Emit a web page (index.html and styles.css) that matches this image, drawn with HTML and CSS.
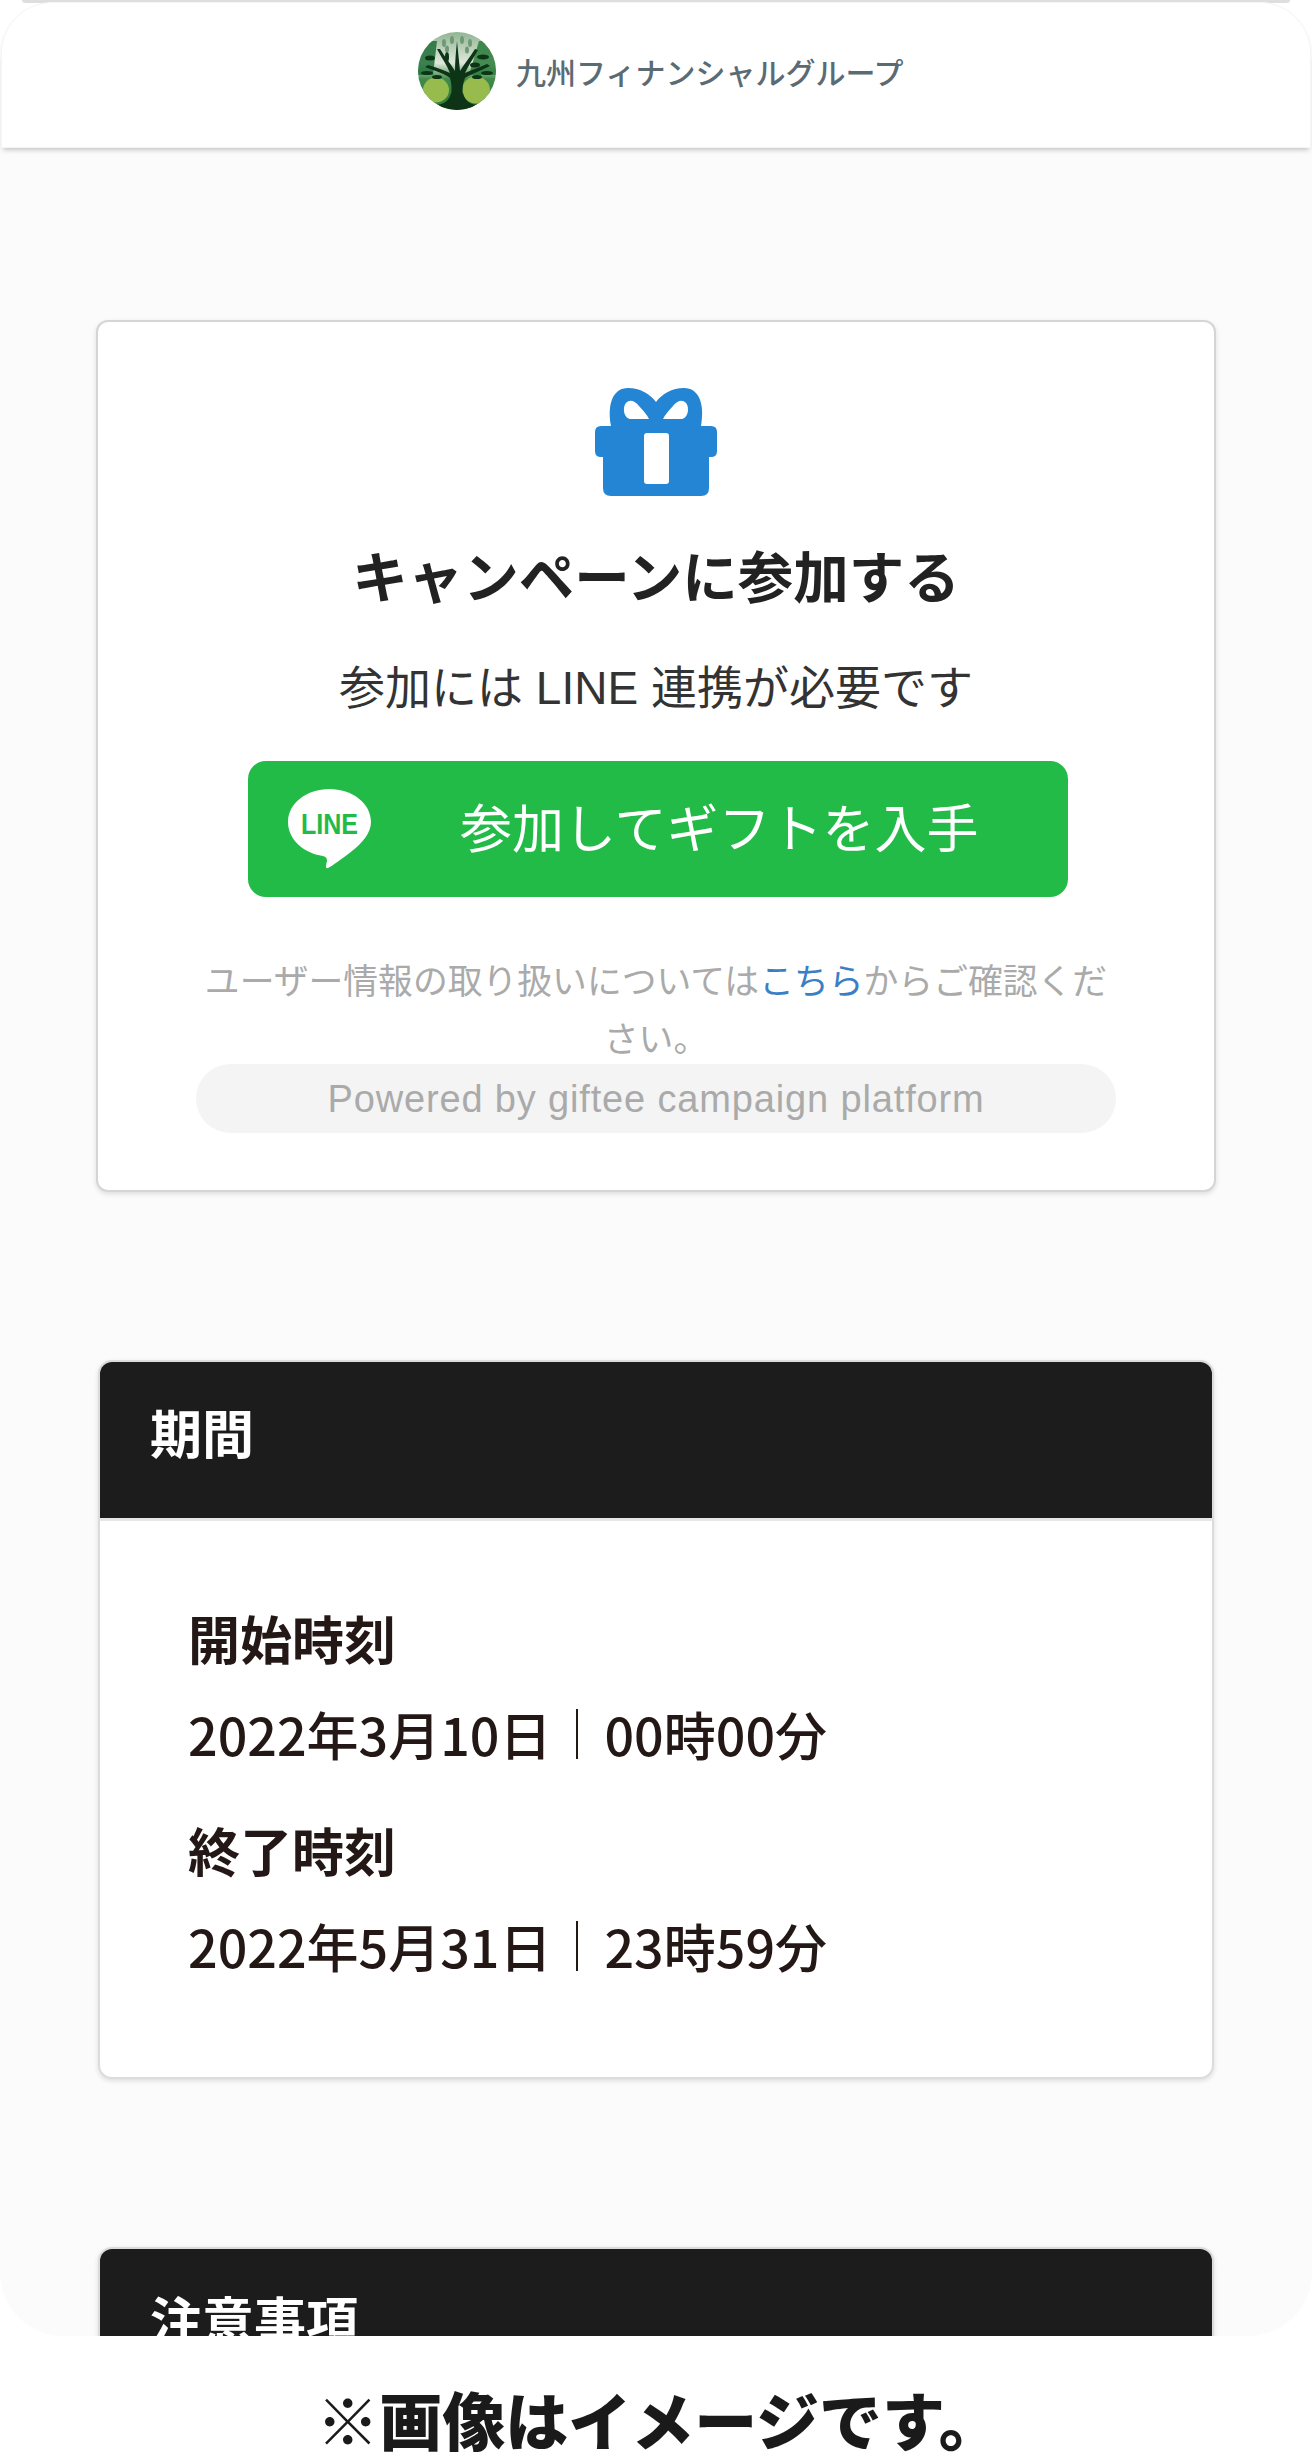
FILE: index.html
```html
<!DOCTYPE html>
<html lang="ja">
<head>
    <meta charset="UTF-8">
    <meta name="viewport" content="width=device-width, initial-scale=1.0">
    <title>九州フィナンシャルグループ</title>
    <link rel="stylesheet" href="styles.css">
</head>
<body>
    <div class="screen">
        <div class="top-strip"></div>
        <header class="app-header">
            <svg class="logo-mark" viewBox="0 0 80 80" width="80" height="80" aria-hidden="true">
                <defs>
                    <linearGradient id="logoBg" x1="0" y1="0" x2="0" y2="1">
                        <stop offset="0" stop-color="#8fb391"/>
                        <stop offset="0.4" stop-color="#dfe8dc"/>
                        <stop offset="0.6" stop-color="#3f8a4a"/>
                        <stop offset="1" stop-color="#2f7a3a"/>
                    </linearGradient>
                    <clipPath id="logoClip"><circle cx="40" cy="40" r="39"/></clipPath>
                </defs>
                <g clip-path="url(#logoClip)">
                    <rect width="80" height="80" fill="url(#logoBg)"/>
                    <path d="M1 44 V10 H20 L16 44Z" fill="#1f6f36" opacity=".85"/>
                    <path d="M79 44 V10 H62 L52 44Z" fill="#2a7a3a" opacity=".85"/>
                    <ellipse cx="19" cy="59" rx="13" ry="12.5" fill="#97bb4c"/>
                    <ellipse cx="59" cy="59" rx="14" ry="13.5" fill="#97bb4c"/>
                    <path d="M33 72 C35 62 35 54 33 47 C27 42 18 40 8 36 L11 34 C20 37 27 39 33 42 C30 34 24 26 20 18 L23 18 C28 26 33 32 38 40 C38 30 39 20 40 10 C41 20 42 30 43 40 C48 32 53 26 58 18 L61 19 C56 28 51 35 48 42 C54 39 61 37 70 33 L73 35 C63 40 54 43 48 47 C45 54 45 62 47 72Z" fill="#0d3416"/>
                    <path d="M40 80 C30 80 24 77 18 73 C26 75 32 70 34 62 L46 62 C48 70 54 75 62 73 C56 77 50 80 40 80Z" fill="#0d3416"/>
                </g>
                <g fill="#0d3416">
                    <ellipse cx="13" cy="27" rx="5" ry="2.5"/>
                    <ellipse cx="10" cy="42" rx="6" ry="2"/>
                    <ellipse cx="20" cy="46" rx="5" ry="2"/>
                    <ellipse cx="66" cy="26" rx="6" ry="2.5"/>
                    <ellipse cx="58" cy="34" rx="5" ry="2.5"/>
                    <ellipse cx="70" cy="42" rx="6" ry="2"/>
                    <ellipse cx="60" cy="46" rx="5" ry="2"/>
                    <ellipse cx="30" cy="26" rx="2" ry="5"/>
                </g>
                <g fill="#6f9a74">
                    <ellipse cx="27" cy="12" rx="2" ry="4"/>
                    <ellipse cx="35" cy="9" rx="2" ry="4"/>
                    <ellipse cx="45" cy="9" rx="2" ry="4"/>
                    <ellipse cx="53" cy="12" rx="2" ry="4"/>
                    <ellipse cx="30" cy="18" rx="2" ry="3.5"/>
                    <ellipse cx="50" cy="19" rx="2" ry="3.5"/>
                </g>
            </svg>
            <span class="logo-text">九州フィナンシャルグループ</span>
        </header>

        <main class="content">
            <section class="join-card">
                <svg class="gift-icon" viewBox="0 0 122 108" width="122" height="108" aria-hidden="true">
                    <path fill="#2385d3" d="M6 38 H116 Q122 38 122 44 V63 Q122 69 116 69 H6 Q0 69 0 63 V44 Q0 38 6 38Z"/>
                    <path fill="#2385d3" d="M8 69 H114 V100 Q114 108 106 108 H16 Q8 108 8 100Z"/>
                    <path fill="#2385d3" fill-rule="evenodd" d="M16 38 C12 16 18 0 33 0 C45 0 55 6 61 14 C67 6 77 0 89 0 C104 0 110 16 106 38Z M54 31 L36 31 C29 31 27 20 31 15 C35 11 40 13 44 18 C48 22 52 27 54 31Z M68 31 L86 31 C93 31 95 20 91 15 C87 11 82 13 78 18 C74 22 70 27 68 31Z"/>
                    <rect x="49" y="45" width="25" height="51" rx="3" fill="#fff"/>
                </svg>
                <h2 class="join-title">キャンペーンに参加する</h2>
                <p class="join-note">参加には LINE 連携が必要です</p>
                <a class="line-button" href="#">
                    <svg class="line-icon" viewBox="0 0 83 80" width="83" height="80" aria-hidden="true">
                        <path fill="#fff" d="M41.5 0 C64 0 83 14 83 33 C83 44 74 54 64 62 C54 70 44 77 40 79 C37 80 38 76 39 72 C39 69 38 68 35 67 C15 64 0 50 0 33 C0 14 19 0 41.5 0Z"/>
                        <text x="13" y="45" textLength="57" lengthAdjust="spacingAndGlyphs" class="line-icon-text">LINE</text>
                    </svg>
                    <span class="line-button-label">参加してギフトを入手</span>
                </a>
                <p class="privacy">ユーザー情報の取り扱いについては<a href="#">こちら</a>からご確認ください。</p>
                <div class="powered">Powered by giftee campaign platform</div>
            </section>

            <section class="info-card">
                <h3 class="info-head">期間</h3>
                <div class="info-body">
                    <p class="info-label">開始時刻</p>
                    <p class="info-value"><span>2022年3月10日</span><i class="sep"></i><span>00時00分</span></p>
                    <p class="info-label">終了時刻</p>
                    <p class="info-value"><span>2022年5月31日</span><i class="sep"></i><span>23時59分</span></p>
                </div>
            </section>

            <section class="info-card">
                <h3 class="info-head">注意事項</h3>
            </section>
        </main>
    </div>
    <p class="caption">※画像はイメージです。</p>
</body>
</html>
```

FILE: styles.css
```css
html, body {
    margin: 0;
    padding: 0;
    background-color: #fff;
}

body {
    font-family: "Noto Sans CJK JP", "Noto Sans", sans-serif;
    width: 1312px;
    height: 2460px;
    overflow: hidden;
}

p, h2, h3 {
    margin: 0;
}

.screen {
    height: 2336px;
    box-sizing: border-box;
    overflow: hidden;
    background:
        linear-gradient(#fff, #fff) left top / 100% 60px no-repeat,
        #fbfbfb;
    border-radius: 0 0 64px 64px;
}

.top-strip {
    height: 3px;
    margin: 0 22px;
    background-color: #dedede;
    border-radius: 0 0 3px 3px;
}

.app-header {
    display: flex;
    align-items: center;
    gap: 19px;
    height: 144px;
    margin: 0 2px;
    padding: 0 0 9px 415px;
    box-sizing: border-box;
    background-color: #fff;
    border-radius: 50px 50px 0 0;
    box-shadow: 0 0 0 1px #f5f5f5, 0 4px 5px -1px rgba(0, 0, 0, 0.22);
}

.logo-mark {
    flex: none;
}

.logo-text {
    font-size: 30px;
    font-weight: 500;
    color: #5b6b74;
    white-space: nowrap;
}

.content {
    display: flex;
    flex-direction: column;
    align-items: center;
    padding-top: 173px;
}

.join-card {
    display: flex;
    flex-direction: column;
    align-items: center;
    width: 1120px;
    height: 872px;
    padding-top: 66px;
    box-sizing: border-box;
    font-family: "Liberation Sans", "Noto Sans CJK JP", sans-serif;
    background-color: #fff;
    border: 2px solid #d5d5d5;
    border-radius: 12px;
    box-shadow: 0 2px 5px rgba(0, 0, 0, 0.12);
}

.gift-icon {
    flex: none;
}

.join-title {
    margin-top: 44px;
    font-size: 55.5px;
    line-height: 78px;
    font-weight: 700;
    color: #222;
}

.join-note {
    margin-top: 40px;
    font-size: 46px;
    line-height: 60px;
    color: #333;
}

.line-button {
    display: flex;
    align-items: center;
    width: 820px;
    height: 136px;
    margin-top: 43px;
    margin-left: 4px;
    padding-left: 40px;
    box-sizing: border-box;
    background-color: #22bb47;
    border-radius: 18px;
    color: #fff;
    text-decoration: none;
}

.line-icon {
    flex: none;
}

.line-icon-text {
    font-family: "Liberation Sans", sans-serif;
    font-size: 29px;
    font-weight: 700;
    fill: #22bb47;
}

.line-button-label {
    margin-left: 89px;
    padding-bottom: 8px;
    font-size: 52px;
    white-space: nowrap;
}

.privacy {
    width: 920px;
    margin-top: 56px;
    font-size: 34.8px;
    line-height: 58px;
    color: #aaa;
    text-align: center;
}

.privacy a {
    color: #3a7fc4;
    text-decoration: none;
}

.powered {
    width: 920px;
    height: 69px;
    margin-top: -5px;
    background-color: #f4f4f4;
    border-radius: 35px;
    font-size: 38px;
    letter-spacing: 0.85px;
    line-height: 71px;
    color: #aaa;
    text-align: center;
}

.info-card {
    width: 1112px;
    margin-top: 168px;
    background-color: #fff;
    border: 2px solid #dcdcdc;
    border-radius: 14px;
    box-shadow: 0 2px 5px rgba(0, 0, 0, 0.12);
    overflow: hidden;
    flex: none;
}

.info-head {
    height: 159px;
    padding: 33px 50px 0;
    box-sizing: border-box;
    background-color: #1c1c1c;
    color: #fff;
    font-size: 52px;
    line-height: 74px;
    font-weight: 700;
    border-bottom: 3px solid #e6e6e6;
}

.info-body {
    height: 556px;
    padding: 80px 88px 0;
    box-sizing: border-box;
    color: #231815;
}

.info-label {
    font-size: 52px;
    line-height: 74px;
    font-weight: 700;
}

.info-value {
    display: flex;
    align-items: center;
    margin-top: 22px;
    margin-bottom: 42px;
    font-size: 52px;
    line-height: 74px;
    font-weight: 500;
}

.sep {
    width: 2px;
    height: 50px;
    margin: 0 26px 0 25px;
    background-color: #231815;
}

.caption {
    margin-top: 40px;
    padding-left: 6px;
    font-size: 63px;
    line-height: 84px;
    font-weight: 900;
    color: #1a1a1a;
    text-align: center;
}
```
